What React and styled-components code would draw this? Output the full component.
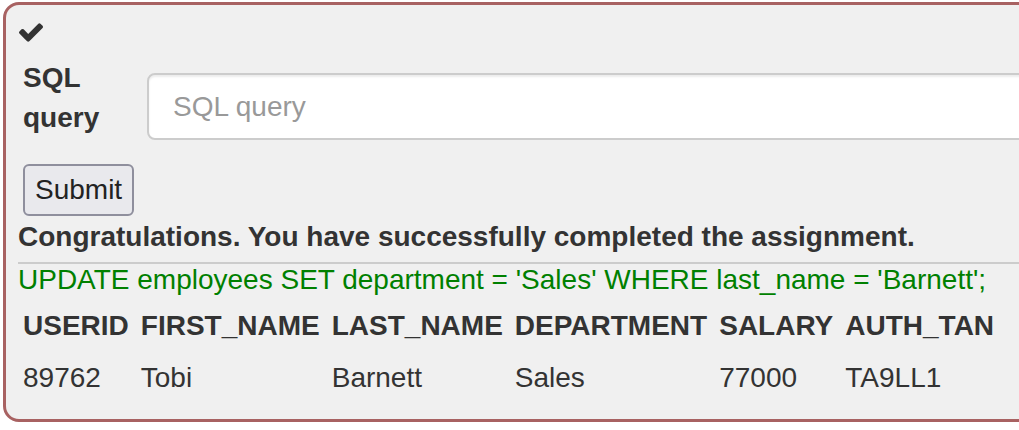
import React from "react";
import styled, { createGlobalStyle } from "styled-components";

const GlobalStyle = createGlobalStyle`
  html, body {
    margin: 0;
    padding: 0;
    background: #ffffff;
    overflow: hidden;
  }
  body {
    font-family: "Liberation Sans", Arial, Helvetica, sans-serif;
    font-size: 28px;
    color: #333333;
  }
`;

const Viewport = styled.div`
  width: 100vw;
  overflow: hidden;
`;

const Panel = styled.div`
  box-sizing: border-box;
  width: calc(100vw + 100px);
  margin: 2px 0 0 3px;
  border: 3px solid #a86262;
  border-radius: 16px;
  background: #f0f0f0;
  padding: 18px 0 15px 12px;
`;

const CheckIcon = styled.svg`
  display: block;
  width: 24px;
  height: 19px;
  margin-left: 1px;
  fill: #333333;
`;

const FormRow = styled.div`
  display: flex;
  align-items: flex-start;
  margin-top: 16px;
`;

const Label = styled.label`
  flex: 0 0 124px;
  margin-left: 5px;
  font-weight: bold;
  font-size: 28px;
  line-height: 40px;
  color: #333333;
`;

const Input = styled.input`
  flex: 1;
  box-sizing: border-box;
  height: 67px;
  margin-top: 15px;
  padding: 0 24px;
  border: 2px solid #cccccc;
  border-radius: 8px;
  background: #ffffff;
  box-shadow: inset 0 2px 2px rgba(0, 0, 0, 0.075);
  font-family: inherit;
  font-size: 28px;
  color: #555555;
  outline: none;
  &::placeholder {
    color: #999999;
  }
`;

const Button = styled.button`
  display: block;
  box-sizing: border-box;
  height: 52px;
  margin: 24px 0 0 5px;
  padding: 4px 10px;
  border: 2px solid #8f8f9d;
  border-radius: 6px;
  background: #e9e9ed;
  font-family: inherit;
  font-size: 28px;
  line-height: 40px;
  color: #222222;
`;

const Message = styled.div`
  margin-top: 1px;
  font-weight: bold;
  line-height: 40px;
  color: #333333;
`;

const Rule = styled.div`
  margin-top: 5px;
  height: 2px;
  background: #cccccc;
`;

const Query = styled.div`
  line-height: 32px;
  color: #008000;
  white-space: nowrap;
`;

const Table = styled.table`
  margin: 4px 0 0 -1px;
  border-collapse: collapse;
`;

const Th = styled.th`
  padding: 6px 6px;
  text-align: left;
  font-weight: bold;
  line-height: 40px;
  white-space: nowrap;
`;

const Td = styled.td`
  padding: 6px 6px;
  line-height: 40px;
  white-space: nowrap;
`;

const columns = ["USERID", "FIRST_NAME", "LAST_NAME", "DEPARTMENT", "SALARY", "AUTH_TAN"];
const rows = [["89762", "Tobi", "Barnett", "Sales", "77000", "TA9LL1"]];

export default function App() {
  return (
    <>
      <GlobalStyle />
      <Viewport>
        <Panel>
          <CheckIcon viewBox="121 334 1550 1188" aria-hidden="true">
            <path d="M1671 566q0 40-28 68l-724 724-136 136q-28 28-68 28t-68-28l-136-136-362-362q-28-28-28-68t28-68l136-136q28-28 68-28t68 28l294 295 656-657q28-28 68-28t68 28l136 136q28 28 28 68z" />
          </CheckIcon>
          <FormRow>
            <Label htmlFor="sql">SQL query</Label>
            <Input id="sql" type="text" placeholder="SQL query" />
          </FormRow>
          <Button type="button">Submit</Button>
          <Message>Congratulations. You have successfully completed the assignment.</Message>
          <Rule />
          <Query>UPDATE employees SET department = 'Sales' WHERE last_name = 'Barnett';</Query>
          <Table>
            <thead>
              <tr>
                {columns.map((c) => (
                  <Th key={c}>{c}</Th>
                ))}
              </tr>
            </thead>
            <tbody>
              {rows.map((r, i) => (
                <tr key={i}>
                  {r.map((v, j) => (
                    <Td key={j}>{v}</Td>
                  ))}
                </tr>
              ))}
            </tbody>
          </Table>
        </Panel>
      </Viewport>
    </>
  );
}
